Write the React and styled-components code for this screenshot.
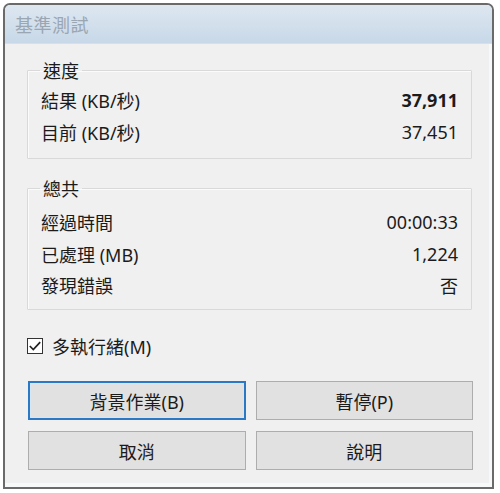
import React from "react";
import styled, { createGlobalStyle } from "styled-components";

const Global = createGlobalStyle`
  html, body { margin: 0; padding: 0; background: #ffffff; }
  body { font-family: "Noto Sans", "Noto Sans CJK TC", sans-serif; }
`;

const Page = styled.div`
  padding: 3px 0 0 3px;
  width: 500px;
  height: 493px;
  box-sizing: border-box;
`;

const Window = styled.div`
  width: 491px;
  height: 486px;
  box-sizing: border-box;
  border: 2px solid #6a6a6a;
  border-radius: 7px 7px 0 0;
  background: #f0f0f0;
  display: flex;
  flex-direction: column;
  overflow: hidden;
  box-shadow: inset -3px -4px 0 #f7f8f9;
`;

const TitleBar = styled.div`
  height: 38px;
  flex: none;
  display: flex;
  align-items: center;
  padding-left: 10px;
  background: linear-gradient(#dde7f0, #c8d8e8);
  border-bottom: 1px solid #d6e0ea;
`;

const Title = styled.span`
  font-family: "Noto Sans CJK TC", sans-serif;
  font-size: 18px;
  color: #9aa6b2;
  letter-spacing: 0.5px;
`;

const Client = styled.div`
  flex: 1;
  display: flex;
  flex-direction: column;
  padding: 14px 20px 0 22px;
  font-family: "Noto Sans", "Noto Sans CJK TC", sans-serif;
  font-size: 18px;
  color: #1b1b1b;
`;

const Group = styled.fieldset`
  margin: 0 0 ${(p) => p.$gap || 0}px 0;
  padding: ${(p) => p.$pt}px 13px ${(p) => p.$pb}px 13px;
  border: 1px solid #d9d9d9;
  box-shadow: inset 1px 1px 0 #fbfbfb;
  border-radius: 1px;
`;

const Legend = styled.legend`
  padding: 0 3px;
  margin-left: -1px;
  line-height: 24px;
  font-family: "Noto Sans CJK TC", sans-serif;
  font-size: 18px;
`;

const Row = styled.div`
  display: flex;
  justify-content: space-between;
  align-items: center;
  height: ${(p) => p.$h || 32}px;
`;

const Label = styled.span`
  white-space: nowrap;
`;

const Value = styled.span`
  font-weight: ${(p) => (p.$bold ? 700 : 400)};
`;

const CheckRow = styled.label`
  display: flex;
  align-items: center;
  gap: 9px;
  height: 24px;
  margin-top: 24px;
  padding-left: 0;
`;

const Box = styled.span`
  width: 14px;
  height: 14px;
  border: 1px solid #333333;
  background: #ffffff;
  display: flex;
  align-items: center;
  justify-content: center;
`;

const Buttons = styled.div`
  display: grid;
  grid-template-columns: 1fr 1fr;
  column-gap: 10px;
  row-gap: 11px;
  margin-top: 23px;
  margin-right: -1px;
  padding-left: 1px;
`;

const Button = styled.button`
  height: 39px;
  box-sizing: border-box;
  background: #e1e1e1;
  border: ${(p) => (p.$focus ? "2px solid #2b78c6" : "1px solid #adadad")};
  box-shadow: ${(p) => (p.$focus ? "inset 0 0 0 1px #d8e6f2" : "none")};
  font-family: "Noto Sans", "Noto Sans CJK TC", sans-serif;
  font-size: 18px;
  color: #1b1b1b;
  padding: 0;
`;

export default function App() {
  return (
    <Page>
      <Global />
      <Window>
        <TitleBar>
          <Title>基準測試</Title>
        </TitleBar>
        <Client>
          <Group $pt={2} $pb={10} $gap={17}>
            <Legend>速度</Legend>
            <Row>
              <Label>結果 (KB/秒)</Label>
              <Value $bold>37,911</Value>
            </Row>
            <Row>
              <Label>目前 (KB/秒)</Label>
              <Value>37,451</Value>
            </Row>
          </Group>
          <Group $pt={5} $pb={9}>
            <Legend>總共</Legend>
            <Row $h={33}>
              <Label>經過時間</Label>
              <Value>00:00:33</Value>
            </Row>
            <Row>
              <Label>已處理 (MB)</Label>
              <Value>1,224</Value>
            </Row>
            <Row $h={30}>
              <Label>發現錯誤</Label>
              <Value>否</Value>
            </Row>
          </Group>
          <CheckRow>
            <Box>
              <svg width="14" height="14" viewBox="0 0 14 14">
                <path d="M1.8 7 L5.3 10.6 L12.2 3.1" fill="none" stroke="#222" strokeWidth="1.7" />
              </svg>
            </Box>
            <span>多執行緒(M)</span>
          </CheckRow>
          <Buttons>
            <Button $focus>背景作業(B)</Button>
            <Button>暫停(P)</Button>
            <Button>取消</Button>
            <Button>說明</Button>
          </Buttons>
        </Client>
      </Window>
    </Page>
  );
}
